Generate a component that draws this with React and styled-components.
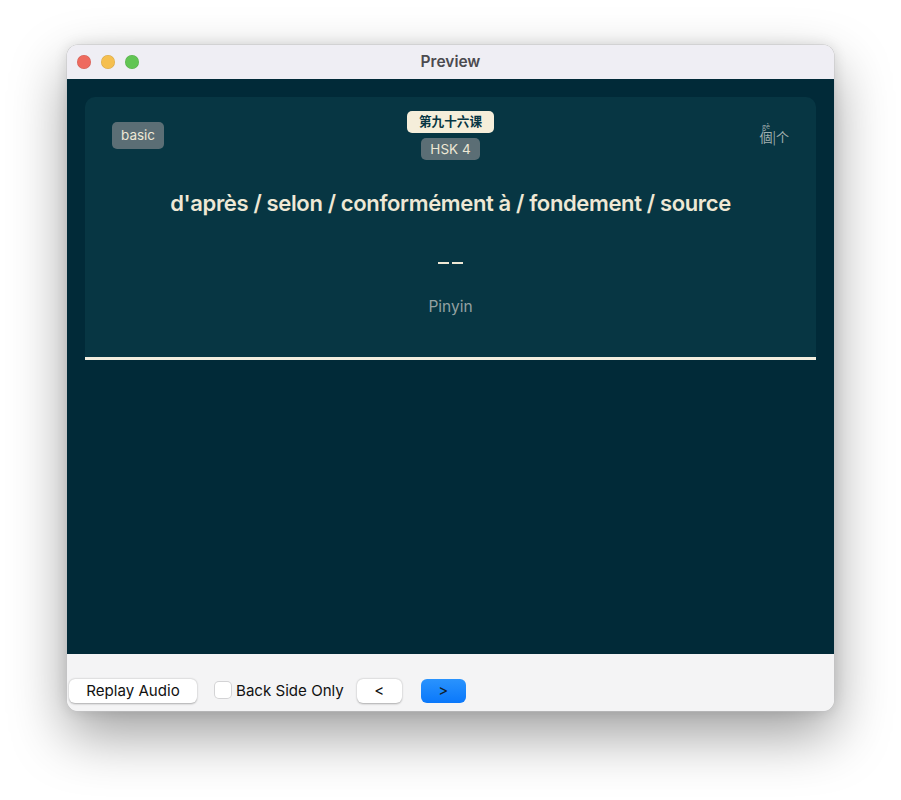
import React from 'react';
import styled, { createGlobalStyle } from 'styled-components';

const GlobalStyle = createGlobalStyle`
  html, body {
    margin: 0;
    background: #fff;
    font-family: Inter, "Noto Sans CJK SC", sans-serif;
  }
`;

const Page = styled.div`
  width: 901px;
  height: 800px;
  padding: 45px 0 0 67px;
  box-sizing: border-box;
  overflow: hidden;
`;

const Window = styled.div`
  width: 767px;
  height: 666px;
  border-radius: 11px;
  overflow: hidden;
  display: flex;
  flex-direction: column;
  box-shadow: 0 0 0 0.5px #c4c4c6, 0 24px 56px rgba(0, 0, 0, 0.38), 0 0 14px rgba(0, 0, 0, 0.12);
`;

const TitleBar = styled.div`
  height: 34px;
  flex: none;
  background: #efeef4;
  display: grid;
  grid-template-columns: 1fr auto 1fr;
  align-items: center;
  padding: 0 10px 1px;
  box-sizing: border-box;
`;

const Lights = styled.div`
  display: flex;
  gap: 10px;
`;

const Light = styled.span`
  width: 14px;
  height: 14px;
  border-radius: 50%;
  background: ${(p) => p.color};
  box-shadow: inset 0 0 0 0.5px rgba(0, 0, 0, 0.12);
`;

const Title = styled.div`
  font-size: 15.5px;
  font-weight: 600;
  color: #4b4a4f;
`;

const Content = styled.div`
  flex: 1;
  background: #012a38;
  padding: 18px;
`;

const Card = styled.div`
  height: 260px;
  background: #073643;
  border-radius: 10px 10px 0 0;
  border-bottom: 3px solid #f2eedf;
  display: flex;
  flex-direction: column;
  align-items: center;
  color: #eee8d5;
`;

const CardTop = styled.div`
  display: grid;
  grid-template-columns: 1fr auto 1fr;
  width: 100%;
  box-sizing: border-box;
  padding: 14px 27px 0;
`;

const Tags = styled.div`
  display: flex;
  flex-direction: column;
  align-items: center;
  gap: 5px;
`;

const Tag = styled.span`
  border-radius: 5px;
  font-size: 13.5px;
  line-height: 22px;
  padding: 0 9px;
  background: #5b6e75;
  color: #eee8d5;
`;

const LessonTag = styled(Tag)`
  background: #f5eeda;
  color: #073643;
  font-size: 12.6px;
  font-weight: 600;
  padding: 0 12px;
`;

const TypeTag = styled(Tag)`
  justify-self: start;
  align-self: start;
  margin-top: 11px;
  line-height: 27px;
`;

const Classifier = styled.ruby`
  justify-self: end;
  align-self: start;
  margin: 11px 0 0 0;
  font-size: 13px;
  color: #a3b0b0;
  font-family: "Noto Sans CJK TC", sans-serif;
  rt {
    font-size: 7px;
    line-height: 8px;
    text-align: center;
  }
`;

const Meaning = styled.div`
  margin-top: 28px;
  font-size: 22px;
  line-height: 30px;
  font-weight: 600;
  letter-spacing: -0.36px;
`;

const Blank = styled.div`
  margin-top: 44px;
  display: flex;
  gap: 3px;
`;

const Dash = styled.span`
  width: 11px;
  height: 2px;
  background: #eee8d5;
`;

const Pinyin = styled.div`
  margin-top: 33px;
  font-size: 15.5px;
  line-height: 20px;
  color: #93a1a1;
`;

const Footer = styled.div`
  height: 57px;
  flex: none;
  background: #f4f4f5;
  box-sizing: border-box;
  display: flex;
  align-items: flex-start;
  padding: 25px 0 0 2px;
`;

const Button = styled.button`
  height: 24px;
  width: ${(p) => p.$width}px;
  margin-right: ${(p) => p.$gap || 0}px;
  padding: 0 0 2px;
  border: none;
  border-radius: 6px;
  font: 15.1px Inter, sans-serif;
  color: ${(p) => (p.$primary ? '#10202c' : '#111')};
  background: ${(p) => (p.$primary ? 'linear-gradient(#2a93fd, #0a78fb)' : '#fff')};
  box-shadow: ${(p) => (p.$primary ? 'none' : '0 0.5px 2px rgba(0, 0, 0, 0.3)')};
`;

const Check = styled.label`
  display: flex;
  align-items: center;
  gap: 5px;
  height: 22px;
  margin-right: 13px;
  font-size: 15.1px;
  color: #111;
`;

const Box = styled.span`
  width: 16px;
  height: 16px;
  background: #fff;
  border-radius: 4px;
  box-shadow: 0 0 0 1px #d3d3d5;
`;

export default function App() {
  return (
    <Page>
      <GlobalStyle />
      <Window>
        <TitleBar>
          <Lights>
            <Light color="#ee6a5f" />
            <Light color="#f5bf4f" />
            <Light color="#62c554" />
          </Lights>
          <Title>Preview</Title>
        </TitleBar>
        <Content>
          <Card>
            <CardTop>
              <TypeTag>basic</TypeTag>
              <Tags>
                <LessonTag>第九十六课</LessonTag>
                <Tag>HSK 4</Tag>
              </Tags>
              <Classifier>個<rt>gè</rt>|个</Classifier>
            </CardTop>
            <Meaning>d'après / selon / conformément à / fondement / source</Meaning>
            <Blank>
              <Dash />
              <Dash />
            </Blank>
            <Pinyin>Pinyin</Pinyin>
          </Card>
        </Content>
        <Footer>
          <Button $width={128} $gap={18}>Replay Audio</Button>
          <Check><Box />Back Side Only</Check>
          <Button $width={45} $gap={19}>&lt;</Button>
          <Button $width={45} $primary>&gt;</Button>
        </Footer>
      </Window>
    </Page>
  );
}
